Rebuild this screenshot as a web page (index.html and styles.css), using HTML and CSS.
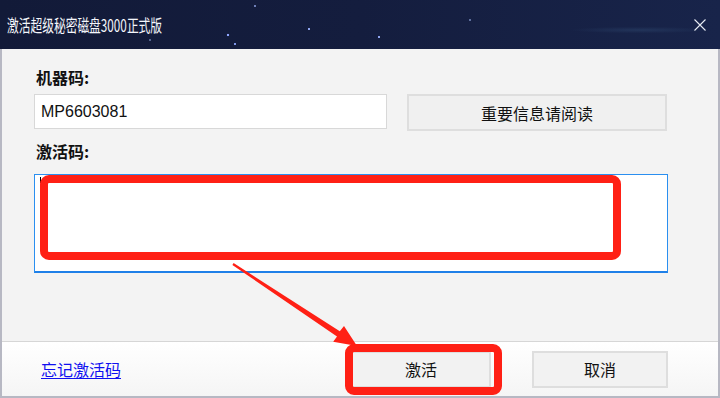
FILE: index.html
```html
<!DOCTYPE html>
<html lang="zh-CN">
<head>
  <meta charset="UTF-8">
  <title>激活超级秘密磁盘3000正式版</title>
  <link rel="stylesheet" href="styles.css">
</head>
<body>

  <div class="window">
    <div class="titlebar">
      <span class="title">激活超级秘密磁盘3000正式版</span>
      <svg class="close" width="12" height="12" viewBox="0 0 12 12">
        <path d="M0.5 0.5 L11.5 11.5 M11.5 0.5 L0.5 11.5" stroke="#e8ecf4" stroke-width="1.1" fill="none"/>
      </svg>
    </div>

    <div class="main">
      <div class="content">
        <div class="label">机器码:</div>
        <div class="row">
          <div class="field">MP6603081</div>
          <button class="btn btn-info">重要信息请阅读</button>
        </div>
        <div class="label label-code">激活码:</div>
        <div class="codebox"><span class="caret"></span></div>
      </div>

      <div class="footer">
        <a href="#" class="forgot">忘记激活码</a>
        <div class="footer-btns">
          <button class="btn btn-foot btn-ok">激活</button>
          <button class="btn btn-foot btn-cancel">取消</button>
        </div>
      </div>
    </div>

    <!-- annotation overlay -->
    <div class="mark mark-code"></div>
    <div class="mark mark-ok"></div>
    <svg class="arrow" width="720" height="398" viewBox="0 0 720 398">
      <polygon fill="#ff2015" points="233.6,263.1 339.8,331.2 344,326 357,346 333.2,341.8 337,336.6 232.4,264.9"/>
    </svg>
  </div>

</body>
</html>
```

FILE: styles.css
```css
* {
  box-sizing: border-box;
}

body {
  margin: 0;
  background: #f3f3f3;
  font-family: "Noto Sans CJK SC", "Liberation Sans", sans-serif;
}

.window {
  position: relative;
  width: 720px;
  height: 398px;
  display: flex;
  flex-direction: column;
  overflow: hidden;
}

.titlebar {
  height: 49px;
  flex-shrink: 0;
  display: flex;
  align-items: center;
  justify-content: space-between;
  padding: 0 14px 0 7px;
  background:
    radial-gradient(circle at 228px 35px, #8fa6ff 0, #8fa6ff 1px, transparent 1.6px),
    radial-gradient(circle at 235px 44px, #7f96e8 0, #7f96e8 0.8px, transparent 1.4px),
    radial-gradient(circle at 309px 29px, #8ea4f0 0, #8ea4f0 0.8px, transparent 1.4px),
    radial-gradient(circle at 379px 37px, #8ea4f0 0, #8ea4f0 0.8px, transparent 1.4px),
    radial-gradient(circle at 255px 6px, #6f80b8 0, #6f80b8 0.7px, transparent 1.3px),
    radial-gradient(circle at 470px 20px, #5f709e 0, #5f709e 0.7px, transparent 1.3px),
    radial-gradient(circle at 150px 40px, #56668f 0, #56668f 0.7px, transparent 1.3px),
    radial-gradient(ellipse at 640px 30px, #22345a 0, transparent 70px),
    linear-gradient(90deg, #121a38 0%, #141d3e 50%, #18244a 100%);
}

.title {
  color: #f4f6fb;
  font-size: 17px;
  display: inline-block;
  white-space: nowrap;
  transform: scaleX(0.69);
  transform-origin: left center;
}

.main {
  flex: 1;
  display: flex;
  flex-direction: column;
  border-left: 2px solid #b7b8c3;
  border-right: 2px solid #b7b8c3;
  border-bottom: 2px solid #b7b8c3;
}

.content {
  flex: 1;
  padding: 18px 50px 0 32px;
  background: #f3f3f3;
}

.label {
  font-size: 16px;
  font-weight: bold;
  line-height: 20px;
  color: #111;
  padding-left: 2px;
}

.row {
  display: flex;
  gap: 20px;
  align-items: flex-start;
  margin-top: 7px;
}

.field {
  width: 353px;
  height: 35px;
  background: #fff;
  border: 1px solid #d8d8d8;
  font-family: "Liberation Sans", sans-serif;
  font-size: 16px;
  line-height: 33px;
  padding-left: 6px;
  color: #111;
}

.btn {
  font-family: "Noto Sans CJK SC", sans-serif;
  font-size: 16px;
  color: #111;
  background: #f0f0f0;
  border: 2px solid #dedede;
  padding: 0;
  cursor: pointer;
}

.btn-info {
  width: 260px;
  height: 37px;
}

.label-code {
  margin-top: 10px;
}

.codebox {
  position: relative;
  margin-top: 13px;
  height: 99px;
  width: 634px;
  background: #fff;
  border: 1px solid #2a8ff0;
  border-bottom-width: 2px;
  border-bottom-color: #1f80e8;
}

.caret {
  position: absolute;
  left: 5px;
  top: 2px;
  width: 1px;
  height: 6px;
  background: #000;
}

.footer {
  height: 55px;
  flex-shrink: 0;
  display: flex;
  align-items: center;
  justify-content: space-between;
  padding: 0 50px 0 39px;
  border-top: 1px solid #d6d6d6;
  background: linear-gradient(#ffffff, #f5f5f5);
}

.forgot {
  color: #1010f0;
  font-size: 16px;
  text-decoration: underline;
  text-underline-offset: 2px;
}

.footer-btns {
  display: flex;
  gap: 41px;
}

.btn-foot {
  height: 37px;
  width: 136px;
  background: #f2f2f2;
}

.btn-ok {
  width: 140px;
}

.mark {
  position: absolute;
  border: 8px solid #ff2015;
  border-radius: 9px;
}

.mark-code {
  left: 40px;
  top: 175px;
  width: 581px;
  height: 85px;
}

.mark-ok {
  left: 345px;
  top: 344px;
  width: 157px;
  height: 51px;
}

.arrow {
  position: absolute;
  left: 0;
  top: 0;
  pointer-events: none;
}
```
